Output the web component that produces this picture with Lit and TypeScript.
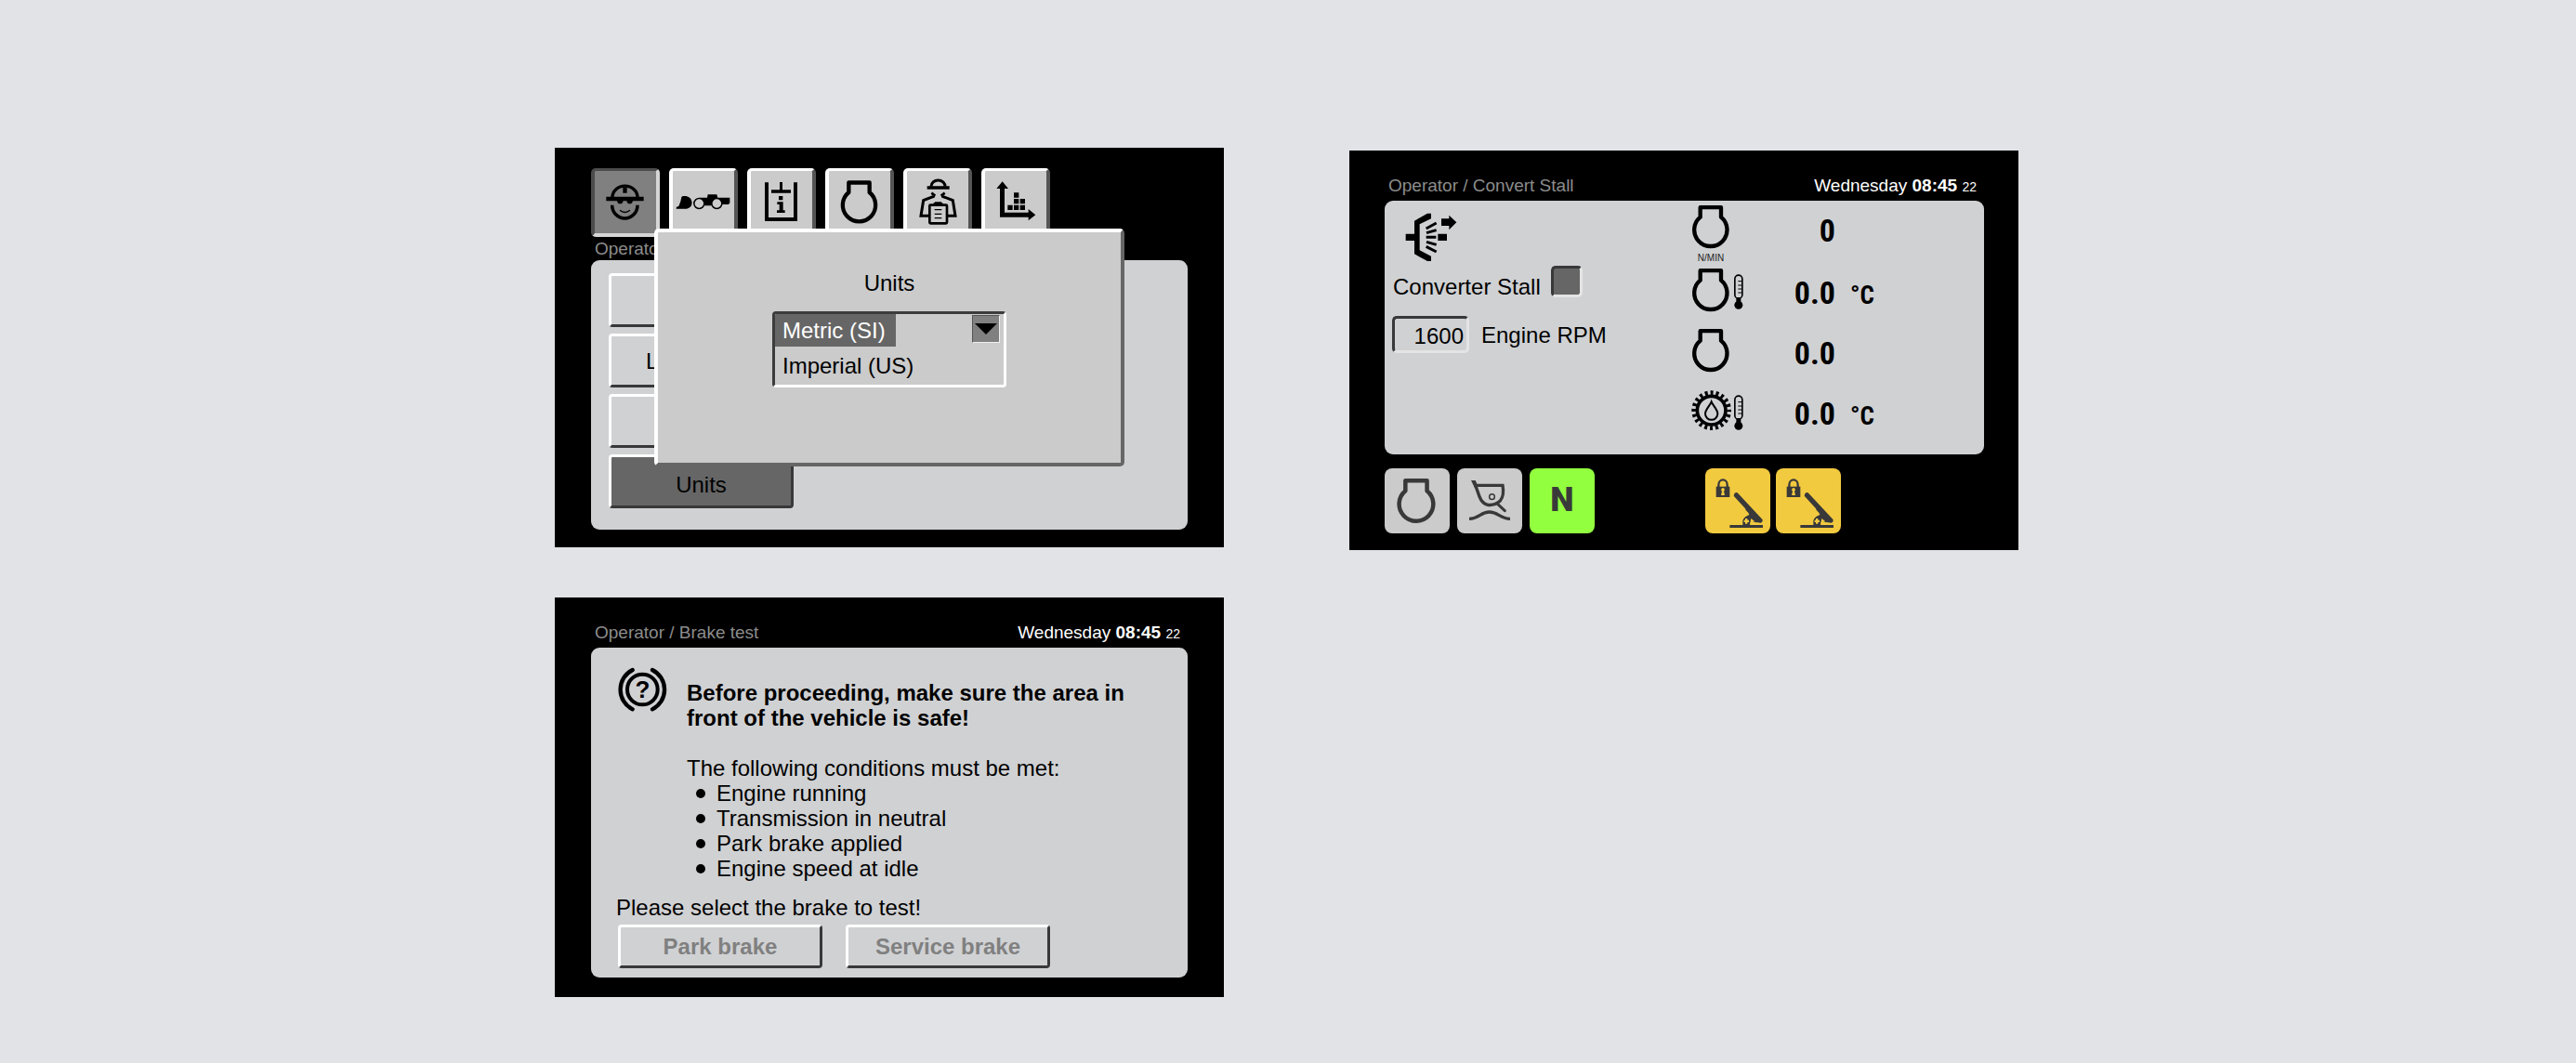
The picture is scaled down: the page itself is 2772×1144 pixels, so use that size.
import { LitElement, html, css, svg, nothing } from "lit";
import type { TemplateResult, SVGTemplateResult } from "lit";
import { customElement, property, state } from "lit/decorators.js";
import { classMap } from "lit/directives/class-map.js";

/* ---------- icons (three drawing units per pixel) ---------- */

const enginePath = svg`<path d="M26 38V6.500H93V38A53 53 0 1 1 26 38Z" fill="none" stroke="currentColor" stroke-width="13" stroke-linejoin="round"/>`;

const thermometer = svg`<g transform="translate(-1 -5)">
  <rect x="138.500" y="26.500" width="24" height="75" rx="12" fill="none" stroke="currentColor" stroke-width="5"/>
  <path d="M149 46h13M149 59h13M149 71h13M149 83h13" stroke="currentColor" stroke-width="3"/>
  <path d="M143 98h15v20h-15z" fill="currentColor"/>
  <circle cx="150.500" cy="123" r="13.500" fill="currentColor"/>
</g>`;

const tabIcons: Record<string, SVGTemplateResult> = {
  operator: svg`<g transform="translate(-150 -106)">
    <path d="M207 188A40.500 36.500 0 0 1 288 188" fill="none" stroke="#000" stroke-width="10"/>
    <path d="M187 186h121v14H187zM241 156h13v18h-13z"/>
    <path d="M222 198h20q-1 11-10 11t-10-11zM253 198h20q-1 11-10 11t-10-11z"/>
    <path d="M206 213A41 43 0 0 0 288 213" fill="none" stroke="#000" stroke-width="10.500"/>
    <path d="M231 230Q247 243 264 230" fill="none" stroke="#000" stroke-width="4"/>
  </g>`,
  machine: svg`<g transform="translate(-401 -106)">
    <path d="M412 225L413 219L420 217Q427 203 429 188Q430 184 436 184H444Q462 188 463 205Q462 222 446 225Z"/>
    <path d="M487 189H512L514 179H543L546 189H585V207L580 211H560V215H470V208Z"/>
    <circle cx="486" cy="208" r="16.500" fill="#cbcbcb" stroke="#000" stroke-width="4.500"/>
    <circle cx="543" cy="208" r="16.500" fill="#cbcbcb" stroke="#000" stroke-width="4.500"/>
  </g>`,
  info: svg`<g transform="translate(-654 -106)">
    <path d="M699 140h12v113h81V140h12v125H699z"/>
    <path d="M747 139h9v25h27v10h-63v-10h27z"/>
    <path d="M744 184h13v13h-13zM739 203h19v27h6v8h-26v-8h8v-19h-7z"/>
  </g>`,
  engine: svg`<g transform="translate(38 28)" color="#000">${enginePath}</g>`,
  service: svg`<g transform="translate(-48 -106)">
    <path d="M126 153A22.500 20 0 0 1 171 153" fill="none" stroke="#000" stroke-width="9"/>
    <path d="M113 152h72v10h-72zM138 205v-2h21v2h4v10h-29v-10z"/>
    <path d="M127 174l9 7l-4 8M170 174l-9 7l4 8" fill="none" stroke="#000" stroke-width="8"/>
    <path d="M134 185L101 198L93 248H120M163 185L196 198L204 248H177" fill="none" stroke="#000" stroke-width="9"/>
    <rect x="121" y="213" width="56" height="59" rx="3" fill="none" stroke="#000" stroke-width="8"/>
    <path d="M137 228h23M137 242h23M137 255h23" stroke="#000" stroke-width="3.500"/>
  </g>`,
  statistics: svg`<g transform="translate(-300 -106)">
    <path d="M348 252V160H337L356 137L375 160H363V237H440V226L463 244.500L440 263V252Z"/>
    <path d="M393 173h16v16h-16zM393 193h16v16h-16zM413 193h16v16h-16zM373 213h16v16h-16zM393 213h16v16h-16zM413 213h16v16h-16z"/>
  </g>`,
};

const converterIcon = html`<svg class="converter-icon" viewBox="216 237 168 159" aria-hidden="true">
  <path d="M218 305h30v22h-30zM322 305h29v22h-29zM333 256h25v-11l24 23l-24 24v-13h-25z"/>
  <path d="M300 239V256L263 274V358L300 377V393H288L246 370V263L288 239Z"/>
  <path d="M284 288L317 270M285 302L317 293M284 316H316M285 331L317 340M284 346L317 363" stroke="#000" stroke-width="9"/>
</svg>`;

const engineGauge = html`<svg class="gauge-engine" viewBox="0 0 120 138" aria-hidden="true">${enginePath}</svg>`;

const engineTempGauge = html`<svg class="gauge-wide" viewBox="0 0 168 138" aria-hidden="true">${enginePath}${thermometer}</svg>`;

const oilTempGauge = html`<svg class="gauge-wide" viewBox="0 0 168 138" aria-hidden="true">
  <circle cx="62" cy="68" r="46" fill="none" stroke="currentColor" stroke-width="11"/>
  <circle cx="62" cy="68" r="57" fill="none" stroke="currentColor" stroke-width="14"
    pathLength="200" stroke-dasharray="5 5" stroke-dashoffset="2.500"/>
  <path d="M62 40C57 53 42 65 42 79A20 19.500 0 0 0 82 79C82 65 67 53 62 40Z" fill="none" stroke="currentColor" stroke-width="6"/>
  ${thermometer}
</svg>`;

const brakeIcon = html`<svg class="brake-icon" viewBox="225 262 159 144" aria-hidden="true">
  <circle cx="304" cy="334" r="49" fill="none" stroke="#000" stroke-width="12"/>
  <path d="M272 271A71 71 0 0 0 272 398M336 271A71 71 0 0 1 336 398" fill="none" stroke="#000" stroke-width="13" stroke-linecap="round"/>
  <text class="brake-mark" x="304" y="362" text-anchor="middle">?</text>
</svg>`;

const engineTile = svg`<g transform="translate(40 33) scale(1.040)">${enginePath}</g>`;

const bucketTile = svg`<g transform="translate(-387 -372)" fill="none" stroke="currentColor">
  <path d="M432 411H446L454 430L444 436Z" fill="currentColor" stroke="none"/>
  <path d="M449 427H534Q540 459 526 477Q508 493 486 490Q467 485 459 463L443 418" stroke-width="10"/>
  <path d="M515 485L541 509" stroke-width="9" stroke-linecap="round"/>
  <circle cx="499.500" cy="464" r="8.500" stroke-width="4.500"/>
  <path d="M426 535C460 535 462 513 491 513S524 535 558 535" stroke-width="10"/>
</g>`;

const lockTile = svg`<g transform="translate(-104 -372)" fill="currentColor">
  <path d="M139 431H183V465H139Z"/>
  <path d="M147 433V425A14 16 0 0 1 175 425V433" fill="none" stroke="currentColor" stroke-width="7"/>
  <path d="M161 435a6 6 0 0 1 3 11l3 13h-12l3-13a6 6 0 0 1 3-11z" fill="#f2ca3f"/>
  <path d="M203 450Q196 452 196 461L233 502Q233 509 243 515L246 522Q229 528 225 540V555H248Q248 549 252 545L274 547Q290 552 289 538L210 453Q207 449 203 450Z"/>
  <path d="M233 534h7v5h5v7h-5v5h-7v-5h-4v-7h4z" fill="#f2ca3f"/>
  <path d="M252 534l12 10l-10 3l-6 6z" fill="#f2ca3f"/>
  <path d="M183 555H290V564H183Z"/>
</g>`;

/* ---------- shared look ---------- */

const shared = css`
  :host {
    display: block;
    color: #000;
    font-family: "Liberation Sans", Arial, sans-serif;
    font-size: 24px;
    line-height: 27px;
  }
  * {
    box-sizing: border-box;
  }
  svg {
    display: block;
    overflow: visible;
  }
  button,
  input,
  select {
    margin: 0;
    padding: 0;
    font: inherit;
    color: inherit;
  }
  .screen {
    position: relative;
    display: flex;
    flex-direction: column;
    padding: 0 39px;
    background: #000;
  }
  .panel {
    border-radius: 9px;
    background: #d0d1d3;
  }
  .raised {
    border: 3px solid;
    border-color: #fff #38383a #38383a #fff;
    border-radius: 4px;
    background: transparent;
  }
`;

@customElement("screen-header")
export class ScreenHeader extends LitElement {
  static styles = [
    shared,
    css`
      .bar {
        display: flex;
        justify-content: space-between;
        padding: 27px 8px 5px 4px;
        font-size: 19px;
        line-height: 22px;
        white-space: nowrap;
      }
      .path {
        color: #8c8c8c;
      }
      .clock {
        color: #fff;
      }
      .seconds {
        font-size: 14px;
        line-height: 14px;
      }
    `,
  ];

  @property() path = "";

  render() {
    return html`<header class="bar">
      <span class="path">${this.path}</span>
      <time class="clock">Wednesday <b>08:45</b> <span class="seconds">22</span></time>
    </header>`;
  }
}

@customElement("units-screen")
export class UnitsScreen extends LitElement {
  static styles = [
    shared,
    css`
      .screen {
        padding-top: 22px;
        padding-bottom: 19px;
      }
      .tabs {
        display: flex;
        gap: 10px;
      }
      .tab {
        width: 74px;
        height: 74px;
        border: 4px solid;
        border-color: #fff #555 #555 #fff;
        border-top-width: 3px;
        border-radius: 5px;
        background: #cbcbcb;
      }
      .tab.active {
        border-color: #4c4c4c #d6d6d6 #d6d6d6 #4c4c4c;
        background: #808080;
      }
      .tab-icon {
        width: 66px;
        height: 66px;
      }
      .path {
        padding: 2px 4px 1px;
        color: #8c8c8c;
        font-size: 19px;
        line-height: 22px;
      }
      .menu {
        display: flex;
        flex-direction: column;
        align-items: flex-start;
        gap: 7px;
        padding: 14px 19px 23px;
      }
      .item {
        width: 199px;
        height: 58px;
      }
      .item.active {
        padding-top: 6px;
        background: #666;
      }
      .dialog {
        position: absolute;
        left: 107px;
        top: 87px;
        display: flex;
        flex-direction: column;
        align-items: center;
        gap: 17px;
        width: 506px;
        height: 256px;
        padding-top: 41px;
        border: 4px solid;
        border-color: #fff #666 #666 #fff;
        border-radius: 5px;
        background: #cbcbcb;
      }
      .combo {
        position: relative;
      }
      .list {
        display: block;
        width: 252px;
        height: 82px;
        border: 3px solid;
        border-color: #3c3c3c #fff #fff #3c3c3c;
        border-radius: 4px;
        background: #cbcbcb;
        outline: none;
        overflow: hidden;
        appearance: none;
      }
      .option {
        height: 38px;
        min-height: 38px;
        padding: 4px 0 0 8px;
        line-height: 27px;
        color: #000;
      }
      .option:checked {
        color: #fff;
        background: linear-gradient(#666, #666) 0 0 / 130px 35px no-repeat #cbcbcb;
      }
      .toggle {
        position: absolute;
        top: 4px;
        right: 7px;
        display: grid;
        place-items: center;
        width: 30px;
        height: 30px;
        border: 1px solid;
        border-color: #555 #eee #eee #555;
        background: #808080;
      }
      .arrow {
        width: 24px;
        height: 12px;
      }
    `,
  ];

  @state() private activeTab = "operator";

  private tab(name: string): TemplateResult {
    const active = name === this.activeTab;
    return html`<button
      class=${classMap({ tab: true, active })}
      aria-label=${name}
      aria-pressed=${active}
      @click=${() => (this.activeTab = name)}
    >
      <svg class="tab-icon" viewBox="0 0 198 198" aria-hidden="true">${tabIcons[name]}</svg>
    </button>`;
  }

  render() {
    return html`<section class="screen">
      <nav class="tabs">${Object.keys(tabIcons).map((name) => this.tab(name))}</nav>
      <div class="path">Operator</div>
      <div class="panel menu">
        <button class="item raised" aria-label="Display"></button>
        <button class="item raised">Languages</button>
        <button class="item raised" aria-label="Clock"></button>
        <button class="item raised active">Units</button>
      </div>
      <div class="dialog" role="dialog" aria-labelledby="units-title">
        <label id="units-title" for="units-list">Units</label>
        <div class="combo">
          <select class="list" id="units-list" size="2">
            <option class="option" selected>Metric (SI)</option>
            <option class="option">Imperial (US)</option>
          </select>
          <button class="toggle" aria-label="Close list">
            <svg class="arrow" viewBox="0 0 24 12" aria-hidden="true"><path d="M0 0H24L12 12Z" /></svg>
          </button>
        </div>
      </div>
    </section>`;
  }
}

interface Reading {
  name: string;
  icon: TemplateResult;
  caption?: string;
  value: string;
  unit?: string;
}

const readings: Reading[] = [
  { name: "Engine speed", icon: engineGauge, caption: "N/MIN", value: "0" },
  { name: "Engine temperature", icon: engineTempGauge, value: "0.0", unit: "°C" },
  { name: "Engine", icon: engineGauge, value: "0.0" },
  { name: "Oil temperature", icon: oilTempGauge, value: "0.0", unit: "°C" },
];

@customElement("stall-screen")
export class StallScreen extends LitElement {
  static styles = [
    shared,
    css`
      .screen {
        padding: 0 37px 18px 38px;
      }
      .panel {
        display: flex;
        justify-content: space-between;
        align-items: flex-start;
        padding: 1px 110px 9px 8px;
      }
      .controls {
        display: flex;
        flex-direction: column;
        align-items: flex-start;
        padding-top: 12px;
      }
      .converter-icon {
        width: 56px;
        height: 53px;
        margin-left: 14px;
      }
      .field {
        display: flex;
        gap: 11px;
      }
      .stall {
        align-items: flex-start;
        margin: 4px 0 18px;
        padding-left: 1px;
      }
      .stall-label {
        padding-top: 9px;
      }
      .check {
        width: 34px;
        height: 34px;
        border: 3px solid;
        border-color: #38383a #e4e4e5 #e4e4e5 #38383a;
        border-radius: 5px;
        background: #666;
        appearance: none;
      }
      .rpm {
        align-items: center;
        gap: 13px;
      }
      .number {
        width: 83px;
        height: 40px;
        padding: 4px 3px 0 0;
        border: 3px solid;
        border-color: #38383a #e4e4e5 #e4e4e5 #38383a;
        border-radius: 5px;
        background: transparent;
        text-align: right;
      }
      .readings {
        border-collapse: collapse;
        font-family: "Liberation Sans Narrow", "Arial Narrow", "Roboto Condensed", "Liberation Sans", sans-serif;
        font-weight: bold;
      }
      .row {
        height: 65px;
      }
      .cell {
        padding: 0 0 6px;
        vertical-align: middle;
      }
      .icon-cell {
        width: 56px;
        padding: 4px 0 0;
        vertical-align: top;
      }
      .gauge {
        display: flex;
        flex-direction: column;
        align-items: flex-start;
        gap: 4px;
      }
      .gauge-engine {
        width: 40px;
        height: 46px;
      }
      .gauge-wide {
        width: 56px;
        height: 46px;
      }
      .caption {
        width: 40px;
        color: #222;
        font: 10px/14px "Liberation Sans", Arial, sans-serif;
        text-align: center;
      }
      .value {
        width: 98px;
        font-size: 34px;
        line-height: 36px;
        text-align: right;
      }
      .unit {
        width: 50px;
        padding: 0 0 0 16px;
        font-size: 27px;
        line-height: 30px;
        text-align: left;
      }
      .softkeys {
        display: flex;
        gap: 8px;
        padding-top: 15px;
      }
      .group {
        display: flex;
        gap: 8px;
      }
      .locks {
        margin-left: 111px;
        gap: 6px;
      }
      .key {
        display: grid;
        place-items: center;
        width: 70px;
        height: 70px;
        border: 0;
        border-radius: 8px;
        background: #cbcbcb;
        color: #39393a;
      }
      .key-icon {
        width: 70px;
        height: 70px;
      }
      .neutral {
        padding-bottom: 2px;
        background: #92ff3f;
        font: 900 36px/40px Roboto, "Liberation Sans", sans-serif;
      }
      .lock {
        background: #f2ca3f;
      }
    `,
  ];

  private key(label: string, icon: SVGTemplateResult, extra = "") {
    return html`<button class="key ${extra}" aria-label=${label}>
      <svg class="key-icon" viewBox="0 0 210 210" aria-hidden="true">${icon}</svg>
    </button>`;
  }

  render() {
    return html`<section class="screen">
      <screen-header path="Operator / Convert Stall"></screen-header>
      <div class="panel">
        <div class="controls">
          ${converterIcon}
          <div class="field stall">
            <label class="stall-label" for="stall">Converter Stall</label>
            <input class="check" id="stall" type="checkbox" />
          </div>
          <div class="field rpm">
            <input class="number" id="rpm" type="text" inputmode="numeric" value="1600" />
            <label for="rpm">Engine RPM</label>
          </div>
        </div>
        <table class="readings">
          <tbody>
            ${readings.map(
              (r) => html`<tr class="row">
                <th class="cell icon-cell" scope="row" aria-label=${r.name}>
                  <div class="gauge">
                    ${r.icon}${r.caption ? html`<span class="caption">${r.caption}</span>` : nothing}
                  </div>
                </th>
                <td class="cell value">${r.value}</td>
                <td class="cell unit">${r.unit ?? nothing}</td>
              </tr>`,
            )}
          </tbody>
        </table>
      </div>
      <div class="softkeys">
        <div class="group">
          ${this.key("Engine", engineTile)} ${this.key("Bucket", bucketTile)}
          <button class="key neutral">N</button>
        </div>
        <div class="group locks">
          ${this.key("Lock left pedal", lockTile, "lock")} ${this.key("Lock right pedal", lockTile, "lock")}
        </div>
      </div>
    </section>`;
  }
}

@customElement("brake-screen")
export class BrakeScreen extends LitElement {
  static styles = [
    shared,
    css`
      .screen {
        padding-bottom: 21px;
      }
      .panel {
        padding: 21px 28px 10px 29px;
      }
      .message {
        display: flex;
        gap: 21px;
      }
      .brake-icon {
        flex: none;
        width: 53px;
        height: 48px;
      }
      .brake-mark {
        font: bold 78px "Liberation Sans", Arial, sans-serif;
      }
      .text {
        padding-top: 14px;
      }
      .line {
        margin: 0;
      }
      .warning {
        margin-bottom: 27px;
        font-weight: bold;
      }
      .conditions {
        margin: 0;
        padding: 0;
        list-style: none;
      }
      .condition {
        display: flex;
        align-items: center;
        gap: 12px;
        padding-left: 10px;
      }
      .condition::before {
        content: "";
        width: 10px;
        height: 10px;
        border-radius: 50%;
        background: #000;
      }
      .prompt {
        margin: 15px 0 5px -2px;
      }
      .choices {
        display: flex;
        gap: 25px;
      }
      .choice {
        width: 220px;
        height: 47px;
        color: #808080;
        font-weight: bold;
      }
    `,
  ];

  render() {
    const conditions = ["Engine running", "Transmission in neutral", "Park brake applied", "Engine speed at idle"];
    return html`<section class="screen">
      <screen-header path="Operator / Brake test"></screen-header>
      <div class="panel">
        <div class="message">
          ${brakeIcon}
          <div class="text">
            <p class="line warning">Before proceeding, make sure the area in<br />front of the vehicle is safe!</p>
            <p class="line">The following conditions must be met:</p>
            <ul class="conditions">
              ${conditions.map((c) => html`<li class="condition">${c}</li>`)}
            </ul>
          </div>
        </div>
        <p class="prompt">Please select the brake to test!</p>
        <div class="choices">
          <button class="choice raised">Park brake</button>
          <button class="choice raised">Service brake</button>
        </div>
      </div>
    </section>`;
  }
}

@customElement("app-root")
export class AppRoot extends LitElement {
  static styles = css`
    :host {
      display: block;
      box-sizing: border-box;
      min-height: 100vh;
      background: #e2e3e7;
    }
    .board {
      display: grid;
      grid-template-columns: repeat(2, minmax(0, 720px));
      justify-content: center;
      align-items: start;
      gap: 135px;
      padding: 0 3px 71px 0;
    }
    .column {
      display: flex;
      flex-direction: column;
      gap: 54px;
      padding-top: 159px;
    }
    .second {
      padding-top: 162px;
    }
  `;

  render() {
    return html`<main class="board">
      <div class="column">
        <units-screen></units-screen>
        <brake-screen></brake-screen>
      </div>
      <div class="column second">
        <stall-screen></stall-screen>
      </div>
    </main>`;
  }
}
